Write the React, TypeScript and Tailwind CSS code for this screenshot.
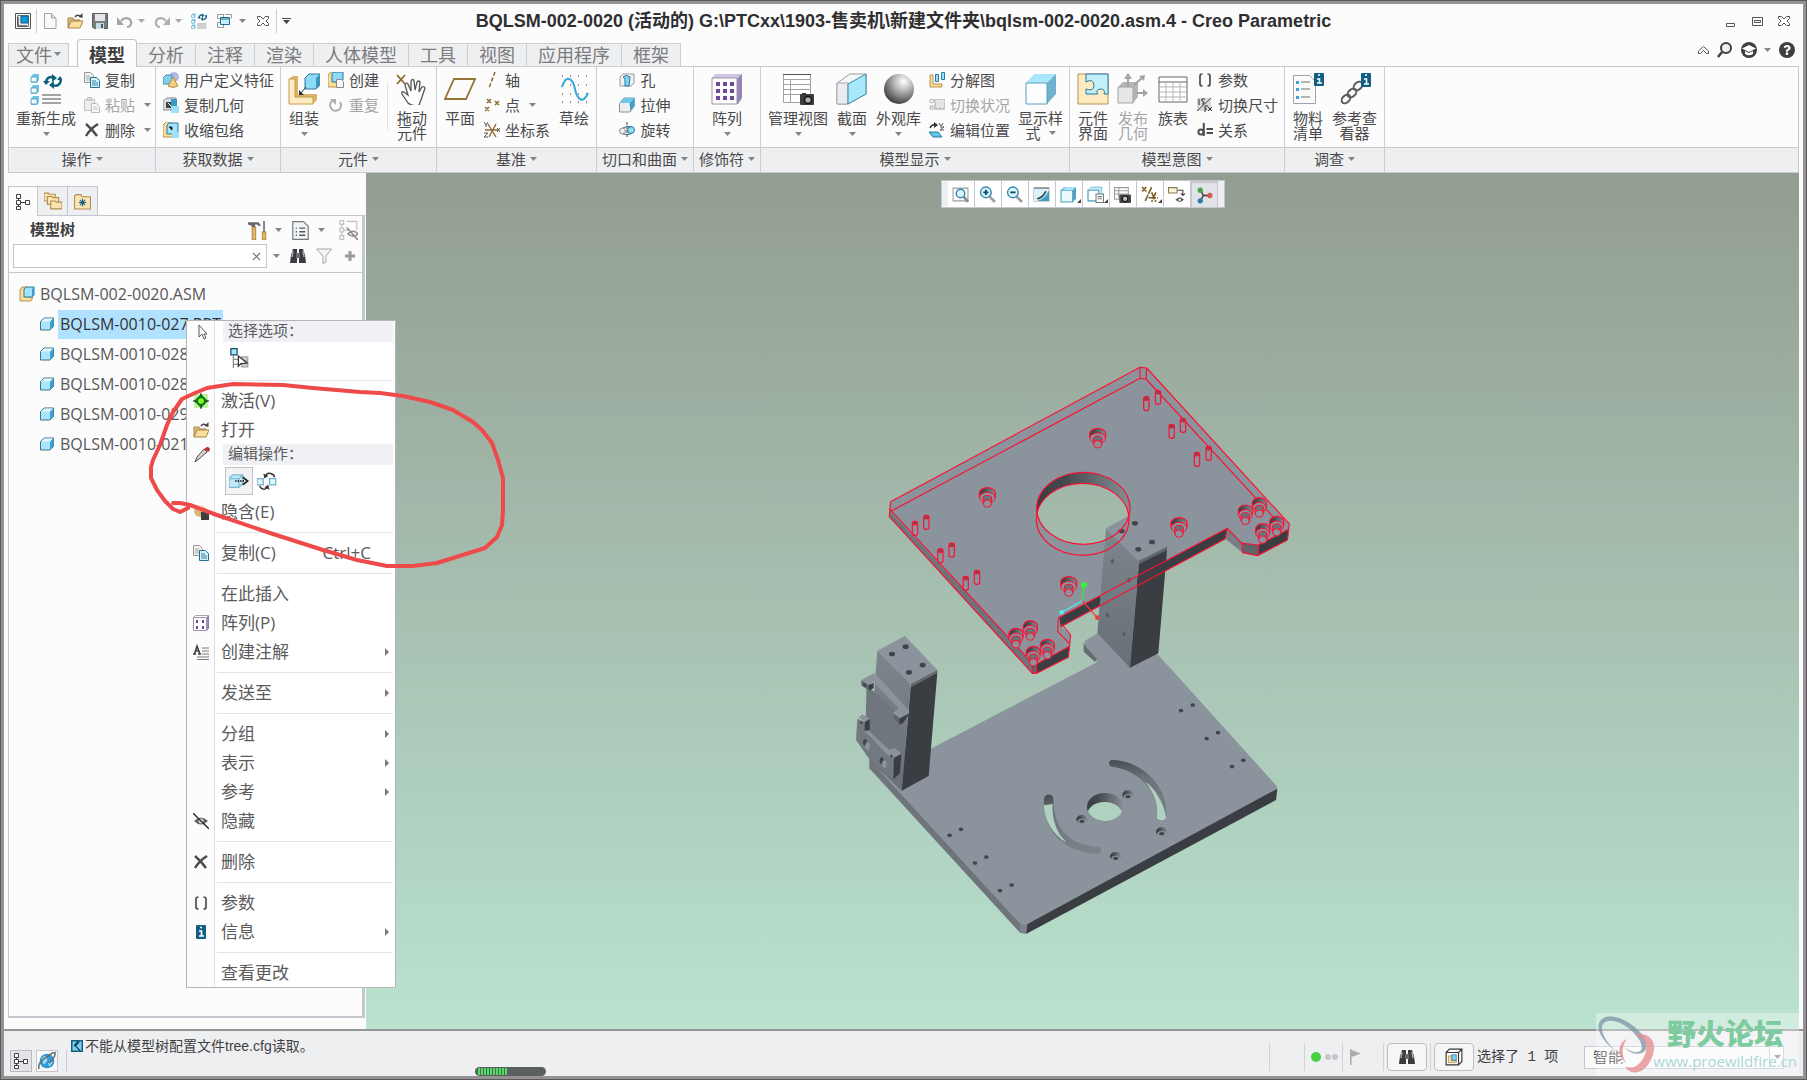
import React from 'react';
import { FaQuestion } from 'react-icons/fa';

const Box = () => (
  <>
    <path d="M1.5 5.5L5 2h9.5v8.5L11 14H1.5z" fill="#a9e6fb" stroke="#3d6f86" />
    <path d="M11 14V5.5L14.5 2v8.5z" fill="#3aa3cf" />
    <path d="M2 5.5L5.3 2.4h8.6L11 5.4z" fill="#e2f7fe" />
  </>
);

const Regen = () => (
  <>
    {[1, 12, 23].map(y => (
      <g key={y}>
        <path d={`M1 ${y + 3}l2-3h6v6l-2 3H1z`} fill="#6ec4e6" />
        <path d={`M1 ${y + 3}h6v5H1z`} fill="#f2fbff" stroke="#5aa7c8" />
      </g>
    ))}
    <path d="M16 9c1-5 5-6 8-4M31 6c0 5-4 8-8 6" fill="none" stroke="#0b5f82" strokeWidth="2.500" />
    <path d="M22 1v8l5-4zM24 16V8l-5 4zM13 8h7l-4 4zM27 7h6l-3-4z" fill="#0b5f82" />
    <path d="M12 22h19M12 26h19M12 30h19" stroke="#a3a3a5" strokeWidth="2" />
  </>
);

// 16px drawings
const small: { [key: string]: React.ReactNode } = {
  app: (<><path d="M.5.5h15v15H.5z" fill="#fff" stroke="#555" /><path d="M2.5 2.5h11v11h-11z" fill="#e8e8e8" stroke="#777" /><path d="M6 3h7v7H6z" fill="#0b9be0" stroke="#0a5d8c" /><path d="M3 4v9h9" fill="none" stroke="#333" /></>),
  file: (<><path d="M2.500.5h7L14 5v10.500H2.500z" fill="#f6f8fa" stroke="#a2a4a8" /><path d="M9.500.5V5H14" fill="#d6dbe0" stroke="#a2a4a8" /></>),
  open: (<><path d="M1 15V5h5l1 2h6v2" fill="#d9b676" stroke="#a98548" /><path d="M1 15l3-7h12l-3 7z" fill="#fbdf9f" stroke="#a98548" /><path d="M8 4q2-3 5-1" fill="none" stroke="#444" strokeWidth="1.500" /><path d="M15.500 0v5l-4-1z" fill="#444" /></>),
  save: (<><path d="M.5.5h15v15H2L.5 14z" fill="#7a7c80" stroke="#5c5e62" /><path d="M3 1h10v7H3z" fill="#e6e6e8" /><path d="M4 10h8v6H4z" fill="#c4dbe8" /><path d="M9 11h2v4H9z" fill="#555" /></>),
  undo: (<><path d="M4 8c4-5 11-3 10 3q-1 3-4 3" fill="none" stroke="#a5a5a7" strokeWidth="2.200" /><path d="M0 4v8h7z" fill="#a5a5a7" /></>),
  redo: (<><path d="M12 8C8 3 1 5 2 11q1 3 4 3" fill="none" stroke="#b0b0b2" strokeWidth="2.200" /><path d="M16 4v8H9z" fill="#b0b0b2" /></>),
  regen: (<g transform="scale(.5)"><Regen /></g>),
  windows: (<><path d="M1.500 1.500h6v4h-6zM9.500 1.500h6v4M1.500 9.500h6v5h-6z" fill="#fff" stroke="#999" /><path d="M4.500 4.500h9v7h-9z" fill="#c5eefb" stroke="#1f6d8f" /><path d="M5 6h8" stroke="#1f6d8f" /></>),
  xOutline: (<path d="M2.500 3.500h3L8 6l2.500-2.500h3v2L11 8l2.500 2.500v2h-3L8 10l-2.500 2.500h-3v-2L5 8 2.500 5.500z" fill="#fff" stroke="#555" />),
  copy: (<><path d="M.5.5h6l3 3v7h-9z" fill="#f1f1f2" stroke="#9a9a9c" /><path d="M2 4h4M2 6h6M2 8h6" stroke="#aaa" /><path d="M6.500 5.500h6l3 3v7h-9z" fill="#d3f1fb" stroke="#27708f" /><path d="M8 9h4M8 11h6M8 13h6" stroke="#3a83a1" /></>),
  paste: (<><path d="M.5 2.500h10v11H.5z" fill="#ededee" stroke="#c2c2c4" /><path d="M3.500.5h4v3h-4z" fill="#ddd" stroke="#c2c2c4" /><path d="M7.500 6.500h5l3 3v6h-8z" fill="#f7f7f7" stroke="#bcbcbe" /><path d="M9 10h4M9 12h5" stroke="#c8c8c8" /></>),
  cross: (<path d="M2 2q6 5 11 12M14 2Q6 7 2 14" fill="none" stroke="#4b4b4d" strokeWidth="2.400" />),
  udf: (<><circle cx="11" cy="5" r="5" fill="#b6b9e4" /><path d="M0 6l3-3h6v6l-3 3H0z" fill="#7fd0ee" stroke="#4a8ba8" /><path d="M10 5l5 9q-5 3-10 0z" fill="#f3cf86" stroke="#b58e46" /></>),
  copyGeom: (<><path d="M0 4l4-3h9v5h-5v7H0z" fill="#dcdde0" stroke="#88898c" /><path d="M3 5h6v6H3z" fill="#444" /><path d="M5 6l3 3" stroke="#fff" /><path d="M8 9h8v7H8z" fill="#9be1fb" /><path d="M8 2h6v7H8" fill="#3b9ac4" /></>),
  shrink: (<><path d="M0 3l3-3h4v10h6v5H0z" fill="#fbdc98" stroke="#b89250" /><path d="M4 3l2-2h9v8l-2 3H4z" fill="#a3e4fa" stroke="#27799d" /><path d="M6 5l3 3V5z" fill="#222" stroke="#222" /><path d="M9 10h7v6H9z" fill="#9be1fb" /></>),
  create: (<><path d="M0 3l3-3h3v10h6v5H0z" fill="#fbdc98" stroke="#b89250" /><path d="M4 2l2-2h9v8l-3 2H4z" fill="#8edbf6" stroke="#27799d" /><path d="M8.500 7.500h5l2 2v6h-7z" fill="#f8f8f8" stroke="#8a8a8c" /></>),
  repeat: (<><path d="M4 4a5.500 5.500 0 1 0 8 1" fill="none" stroke="#b0b0b2" strokeWidth="2" /><path d="M2 2h6v6z" fill="#b0b0b2" /></>),
  axis: (<path d="M11 0L5 16" stroke="#8c6c2d" strokeWidth="1.500" strokeDasharray="4 2" />),
  points: (<path d="M3 2l4 4M7 2L3 6M11 4l4 4M15 4l-4 4M1 10l4 4M5 10l-4 4" stroke="#8c6c2d" strokeWidth="1.500" />),
  csys: (<><path d="M1 8h14M4 2l8 13M12 2L5 15" stroke="#8c6c2d" strokeWidth="1.400" /><path d="M0 0l2 3 2-3M2 3v2M0 11h4l-4 4h4M13 6l3 4M16 6l-3 4" fill="none" stroke="#555" /></>),
  hole: (<><path d="M1 5l3-3h11v9l-3 3H1z" fill="#eef0f2" stroke="#9a9ca0" /><path d="M4 5q3-3 7 0l-1 9H6l0-7z" fill="#7fd3f2" stroke="#27799d" /></>),
  extrude: (<><path d="M.5 6.500L5 1h10.500v8L11 15H.5z" fill="#eceef0" stroke="#8b8d90" /><path d="M5 1h10.500v8h-5V6h-10z" fill="#6fc7e8" /><path d="M11 6l4-4v7l-4 5z" fill="#3d9fc8" /></>),
  revolve: (<><circle cx="3.500" cy="9" r="3" fill="#eee" stroke="#8b8d90" /><circle cx="12" cy="8" r="3.500" fill="#8edbf6" stroke="#27799d" /><path d="M4 6q5-3 8-1M4 12q4 1 8 0" fill="none" stroke="#27799d" /><path d="M8 0v16" stroke="#444" strokeDasharray="3 1" /></>),
  explode: (<><path d="M1 3h3v9h9v3H1z" fill="#fbdc98" stroke="#b89250" /><path d="M6.500 2.500h3v7h-3zM12.500.5h3v7h-3z" fill="#9be1fb" stroke="#27799d" /></>),
  toggleState: (<><circle cx="2.500" cy="4" r="1.800" fill="none" stroke="#aaa" /><path d="M1 9h3v3H1z" fill="none" stroke="#aaa" /><path d="M5 2h11v11H5z" fill="#c9c9cb" /><path d="M8 3v7h2V3M12 3v7h2V3" fill="none" stroke="#fff" /></>),
  editPos: (<><path d="M1 6q2-4 5-3" fill="none" stroke="#333" strokeWidth="1.500" /><path d="M5 0v6l4-3z" fill="#333" /><path d="M10 1l2 3 2-3M11 5h4l-4 3h4" fill="none" stroke="#555" /><path d="M0 10h9l4 5H4z" fill="#63c5ea" stroke="#27799d" /></>),
  params: (<path d="M5.500 2Q3 2 3 4v8q0 2 2.500 2M10.500 2q2.500 0 2.500 2v8q0 2-2.500 2" fill="none" stroke="#4d4d4f" strokeWidth="1.700" />),
  dims: (<><path d="M0 1h14v13H0z" fill="#d8d8da" /><path d="M0 14L14 1" stroke="#444" /><path d="M2 2v6M5 2h3M5 2v2l2 1v2H5M8 15V9h3M8 12h2M11 10l4 4M15 10l-4 4" fill="none" stroke="#333" /></>),
  relation: (<><circle cx="4" cy="10" r="2.600" fill="none" stroke="#4d4d4f" strokeWidth="2" /><path d="M6.800 1v13M9.500 7H16M9.500 11H16" stroke="#4d4d4f" strokeWidth="2" /></>),
  part: (<Box />),
  asm: (<><path d="M1 4l2-3h4v10h7l-2 4H1z" fill="#fbdc98" stroke="#b89250" /><path d="M5 3l2-2h8v8l-2 2H5z" fill="#a3e4fa" stroke="#27799d" /><path d="M13 11V3l2-2v8z" fill="#3aa3cf" /></>),
  tree: (<path d="M1.500.5h4v4h-4zM1.500 6.500h4v4h-4zM1.500 12.500h4v3h-4zM10.500 6.500h4v4h-4zM3.500 4.500v2M3.500 10.500v2M5.500 8.500h5" fill="#fff" stroke="#3f3f41" />),
  folders: (<>{[[0, 0], [3, 3], [6, 7]].map(([x, y]) => (<path key={x} d={`M${x} ${y + 1}h4l1 1h5v6H${x}z`} fill="#fbe4b0" stroke="#b08f55" />))}</>),
  favorites: (<><path d="M.5 15V2.500l2-1h4l1 2h8V15z" fill="#fbe4b0" stroke="#b08f55" /><path d="M8 5.500v7M4.500 9h7M5.500 6.500l5 5M10.500 6.500l-5 5" stroke="#126083" /></>),
  tools: (<><path d="M0 1h9l2 3H8V3H6v2H3V4L0 3z" fill="#66686b" /><path d="M3.500 5h3v11h-3z" fill="#e5b45f" stroke="#96702f" strokeWidth=".6" /><path d="M13.500 0v9" stroke="#77797c" strokeWidth="1.500" /><path d="M12 9h3v7h-3z" fill="#e5b45f" stroke="#96702f" strokeWidth=".6" /></>),
  listDoc: (<><path d="M1.500.5h9l4 4v11h-13z" fill="#f0f5f8" stroke="#77797c" /><path d="M4 6h1M4 9h1M4 12h1M7 6h5M7 9h5M7 12h5" stroke="#55575a" strokeWidth="1.200" /></>),
  treeHide: (<><path d="M1.500.5h3v3h-3zM1.500 6.500h3v3h-3zM1.500 12.500h3v3h-3zM3 4v2M3 10v2M5 8h4M7 1h8v7" fill="none" stroke="#c2c2c4" /><path d="M8 11q4-4 8 0-4 4-8 0zM7 6l9 10" fill="none" stroke="#8d8d8f" strokeWidth="1.300" /></>),
  find: (<><path d="M0 15l1-8 2-6h4v14zM16 15l-1-8-2-6H9v14z" fill="#3a3c3f" /><path d="M6 5h4v5H6z" fill="#6b6d70" /><path d="M2 9l1-6M13 3l1 6" stroke="#a8aaad" strokeWidth="1.500" /></>),
  filter: (<path d="M.5 1h15L10 8v6l-3 1.500V8z" fill="#f4f4f5" stroke="#a7a7a9" />),
  plus: (<path d="M6.500 3h3v3.500H13v3H9.500V13h-3V9.500H3v-3h3.500z" fill="#9b9b9d" />),
  cursor: (<path d="M5 1v12l3-3 2 5 2-1-2-4h3z" fill="#fff" stroke="#555" />),
  activate: (<><path d="M1 1h14v14H1z" fill="#bdf3a2" /><path d="M8 1l7 7-7 7-7-7z" fill="#0d7a12" /><circle cx="8" cy="8" r="3.500" fill="#7bfb2c" stroke="#065e0a" /><path d="M8 0v3M8 13v3M0 8h3M13 8h3" stroke="#222" /></>),
  pencil: (<><path d="M1 15l2-5 7-8 3 3-8 7z" fill="#d6d1cb" stroke="#55504b" /><path d="M10 2l3-2q3 0 3 3l-2 2z" fill="#b8322d" /></>),
  suppress: (<><circle cx="7" cy="7" r="6" fill="#dcb877" /><path d="M3 4q3-3 7-1" stroke="#fff3d3" strokeWidth="2" fill="none" /><path d="M8 8h8v8H8z" fill="#3f3f41" /></>),
  pattern: (<><path d="M13.500 2.500l2-2v13l-2 2z" fill="#9d87c4" stroke="#8f79b5" /><path d="M.5 2.500l2-2h13l-2 2z" fill="#fff" stroke="#aaa5b5" /><path d="M.5 2.500h13v13H.5z" fill="#fff" stroke="#9b96a8" /><path d="M3 5h2v3H3zM9 5h2v3H9zM3 11h2v3H3zM9 11h2v3H9z" fill="#6c4b9c" /></>),
  note: (<><path d="M0 10h3M5 10h3M1.500 10l2.500-8 3 8M2.500 7h3" stroke="#3f3f41" strokeWidth="1.500" fill="none" /><path d="M9 4h7M9 7h7M9 10h7M4 13h12M4 15.500h12" stroke="#77797c" /></>),
  hide: (<><path d="M1 8q7-7 14 0-7 7-14 0z" fill="#5c5e61" /><circle cx="8" cy="8" r="2.500" fill="#ddd" /><path d="M0 0l16 16" stroke="#222" strokeWidth="1.300" /></>),
  info: (<><rect x="3" y="1" width="10" height="14" rx="1" fill="#125f83" /><path d="M7 3.500h2M6 7h2.500v5M6 12h5" stroke="#fff" strokeWidth="1.700" fill="none" /></>),
  msg: (<><path d="M1 1h14v14H1z" fill="#7fd0ee" stroke="#125f83" strokeWidth="2" /><path d="M11 2L6 8l6 6M9 2L4 8" stroke="#0b4863" strokeWidth="1.600" fill="none" /></>),
  globe: (<><circle cx="8" cy="8" r="6.500" fill="#2e9bd3" /><path d="M3 6q4-5 5-1t-3 6zM9 10q3-3 4-1l-3 4z" fill="#9bdaf3" /><path d="M1 15Q-1 10 8 4t7-3q1 3-5 9" fill="none" stroke="#6c6e71" strokeWidth="1.400" /></>),
  flag: (<path d="M1 0h1.500v1L12 4.500 2.500 8v8H1z" fill="#aaacae" />),
  boxSelect: (<><path d="M1 4l3-3h11v11l-3 3H1zM1 4h11v11M12 4l3-3" fill="#fff" stroke="#333" /><path d="M3 7h3v4h4v2H3z" fill="#fbdc98" stroke="#b89250" strokeWidth=".7" /><path d="M6 6h4v5H6z" fill="#7fd0ee" stroke="#27799d" strokeWidth=".7" /></>),
  treeSelect: (<><path d="M3.500 6v10M3.500 9h6M3.500 13h6" fill="none" stroke="#8b8b8d" /><path d="M10 7h5v3h-5zM10 11h5v4h-5z" fill="#c9c9cb" stroke="#a5a5a7" /><path d="M1.500.5h5v5h-5z" fill="#9be6fc" stroke="#1a4d66" /><path d="M7.500 6.500v8l2-2 5-.5z" fill="#fff" stroke="#333" /></>),
  redefine: (<><path d="M0 6l3-3h8v7l-3 3H0z" fill="#bfeafa" stroke="#7fb9d0" /><path d="M0 6h8v7M8 6l3-3" fill="none" stroke="#7fb9d0" /><path d="M5 8h8" stroke="#222" strokeDasharray="1 1" strokeWidth="1.500" /><path d="M11 5l4 3-4 3" fill="none" stroke="#222" strokeWidth="1.300" /></>),
  replace: (<><path d="M0 6h5v5H0zM10 6h5v5h-5z" fill="#dff5fc" stroke="#6fb3cd" /><path d="M7 4q1-3 4-2t3 3M8 13q-1 2-3 1.500T2 12" fill="none" stroke="#333" strokeWidth="1.200" /><path d="M5 2l1 4 3-2zM10 15l-1-4-3 2z" fill="#333" /></>),
  zoomFit: (<><path d="M1 2h14v12H1z" fill="#fff" stroke="#9b9da0" /><circle cx="8" cy="7" r="4" fill="#e3f6fd" stroke="#2b88b0" strokeWidth="1.300" /><path d="M11 10l4 5" stroke="#8b8d90" strokeWidth="2.500" /></>),
  zoomIn: (<><path d="M10 10l5 5" stroke="#9b9da0" strokeWidth="2.500" /><circle cx="6.500" cy="6" r="5" fill="#e3f6fd" stroke="#2b88b0" strokeWidth="1.300" /><path d="M4 6h5M6.500 3.500v5" stroke="#0c4d6c" strokeWidth="1.800" /></>),
  zoomOut: (<><path d="M10 10l5 5" stroke="#9b9da0" strokeWidth="2.500" /><circle cx="6.500" cy="6" r="5" fill="#e3f6fd" stroke="#2b88b0" strokeWidth="1.300" /><path d="M4 6h5" stroke="#0c4d6c" strokeWidth="1.800" /></>),
  repaint: (<><path d="M1 2h14v12H1z" fill="#8fd0e8" stroke="#9b9da0" /><path d="M1 2h14v2L4 14H1z" fill="#d9f3fb" /><path d="M15 5v9H5q7-2 10-9z" fill="#3f9dc2" /><path d="M12 5q-3 6-8 7" fill="none" stroke="#222" strokeWidth="1.300" /><path d="M1 2h14" stroke="#8b8d90" strokeWidth="1.500" /></>),
  viewBox: (<><path d="M1 4l3-3h11v11l-3 3H1z" fill="#4f9fc2" /><path d="M1 4h11v11H1z" fill="#e9f9fe" stroke="#4f9fc2" /><path d="M2 4l3-3h10l-3 3z" fill="#a5e4fa" /></>),
  savedViews: (<><path d="M1 4l3-3h10v10l-3 3H1z" fill="#bfeafa" stroke="#6fb3cd" strokeWidth=".7" /><path d="M1 4h10v10H1z" fill="#fff" stroke="#4f9fc2" /><path d="M8.500 7.500h7v8h-7z" fill="#fff" stroke="#77797c" /><path d="M10 10h4M10 12h4" stroke="#77797c" /></>),
  viewMgr: (<><path d="M.5 1.500h13v11H.5zM.5 4.500h13M.5 7.500h13M4.500 1.500v11" fill="#fff" stroke="#9b9da0" /><rect x="5" y="8" width="11" height="8" rx="1" fill="#444" /><circle cx="10.500" cy="12" r="2.600" fill="#bbb" stroke="#111" /></>),
  datum: (<path d="M1 1l4 4M5 1L1 5M10 1L4 14M7 11h9M10 6l4 9M14 6l-4 9" stroke="#7d5f25" strokeWidth="1.500" strokeDasharray="7 1" />),
  annot: (<><path d="M.5 1.500h8v5h-8z" fill="#fdf3dc" stroke="#8c7a55" /><path d="M9 4h5v5M12 7l2 2 2-2" fill="none" stroke="#444" /><path d="M7 13q4-5 8 0-4 4-8 0z" fill="#555" /><circle cx="11" cy="13" r="1.200" fill="#fff" /></>),
  spin: (<><path d="M4 3l3 5-3 5M7 8h6" fill="none" stroke="#333" strokeWidth="1.300" /><circle cx="4" cy="3" r="2.500" fill="#45a34a" /><circle cx="4" cy="13" r="2.500" fill="#2b7fb0" /><circle cx="13" cy="8" r="2.500" fill="#d9534f" /></>),
};

// 32px drawings
const large: { [key: string]: React.ReactNode } = {
  regen: (<Regen />),
  assemble: (<><path d="M1 6l4-3h5v18h19v6l-4 4H1z" fill="#dcb263" /><path d="M1 6h6v18h18v7H1z" fill="#fdebc2" stroke="#c39c50" /><path d="M17 5l4-4h11v11l-4 4H17z" fill="#8edbf6" stroke="#27799d" /><path d="M28 5l4-4v11l-4 4z" fill="#3e93b8" /><path d="M18 14l-6 7" stroke="#333" /><path d="M11 17v5h5z" fill="#333" /></>),
  drag: (<><path d="M1 2l8 9M9 2L1 11" stroke="#8c6c2d" strokeWidth="1.800" /><path d="M12 30l-6-9q-1-3 2-2l4 3-3-10q1-3 3-1l3 7 0-10q2-3 3 0l1 9 2-8q2-2 3 0l-1 10 3-5q2-1 3 1l-4 12-2 5q-6 2-11-2z" fill="#fff" stroke="#555" strokeWidth="1.300" /></>),
  plane: (<path d="M10 6h21l-9 20H1z" fill="none" stroke="#937338" strokeWidth="1.800" />),
  sketch: (<><path d="M4 3h25M4 12h25M4 21h25M4 29h25" stroke="#222" strokeDasharray="1 7" /><path d="M4 14c4-14 11-8 13 2s8 16 13 4" fill="none" stroke="#3aa8dc" strokeWidth="2" /></>),
  pattern: (<><path d="M1 5l4-4h26v24l-4 6H1z" fill="#9884bd" /><path d="M1 5l4-4h26l-4 4z" fill="#cfc5e2" /><path d="M1 5h25v26H1z" fill="#fdfdff" stroke="#9a96a6" />{[9, 16, 23].map(y => [5, 12, 19].map(x => (<path key={`${x}-${y}`} d={`M${x} ${y}h4v4h-4z`} fill="#6c4b9c" />)))}</>),
  viewMgr: (<><path d="M1.500 1.500h27v28h-27zM1.500 6.500h27M1.500 11.500h27M1.500 16.500h27M1.500 21.500h27M8.500 6v23" fill="#fff" stroke="#a0a2a5" /><path d="M1 1.500h28" stroke="#555" /><rect x="18" y="21" width="14" height="11" rx="1" fill="#3d3d3f" /><circle cx="26" cy="27" r="3.500" fill="#aaa" stroke="#111" strokeWidth="1.500" /><path d="M20 20h4v2h-4z" fill="#333" /></>),
  section: (<><path d="M1 10L14 1h16v20L12 31H1z" fill="#f5f6f7" stroke="#999b9e" /><path d="M1 10h11v21H1z" fill="#ececee" stroke="#a5a7aa" /><path d="M12 11L30 1v20L12 31z" fill="#a9e8fc" stroke="#3c87a8" /></>),
  sphere: (<circle cx="16" cy="16" r="15" fill="url(#ball)" />),
  style: (<><path d="M1 10L10 1h21v20l-9 10H1z" fill="#6fb2cf" /><path d="M1 10L10 1h21l-9 9z" fill="#a9e8fc" /><path d="M1 10h21v21H1z" fill="#fdfeff" stroke="#5b9db9" /></>),
  iface: (<><path d="M1 1h30v30H1z" fill="#fdebc2" stroke="#b89250" /><path d="M9 1h22v20h-4q2-5-4-5-5 1-2 5H9v-5q8 3 8-4-1-7-8-3z" fill="#c3eefb" stroke="#27799d" /></>),
  publish: (<><path d="M1 14l5-5h15v15l-5 6H1z" fill="#b5b5b7" /><path d="M1 14h15v16H1z" fill="#e6e6e8" stroke="#a3a3a5" /><path d="M11 14V3M17 12l9-8M18 20h10" stroke="#a3a3a5" strokeWidth="2" /><path d="M11 0l4 6H7zM31 20l-5 4v-8zM28 2l-1 6-5-5z" fill="#a3a3a5" /></>),
  family: (<><path d="M2 4h28v25H2z" fill="#fff" stroke="#666" /><path d="M2 9h28" stroke="#666" /><path d="M2 14h28M2 19h28M2 24h28M9 9v20M16 9v20M23 9v20" stroke="#b5b5b7" /></>),
  bom: (<><path d="M1.500 2.500h16l6 6v22h-22z" fill="#fafafa" stroke="#a0a2a5" /><path d="M9 9h9M9 16h9M9 24h9" stroke="#9b9da0" strokeWidth="1.500" /><path d="M4 8h3v3H4zM4 15h3v3H4zM4 23h3v3H4z" fill="#35a4d6" /><rect x="22" y="0" width="10" height="13" rx="1" fill="#125f83" /><path d="M26 2h2M25 6h2.500v4M25 10h5" stroke="#fff" strokeWidth="1.500" fill="none" /></>),
  refs: (<><g fill="none" stroke="#5b5b5d" strokeWidth="2"><ellipse cx="7" cy="26" rx="5" ry="3.500" transform="rotate(-45 7 26)" /><ellipse cx="13" cy="20" rx="5" ry="3.500" transform="rotate(-45 13 20)" /><ellipse cx="19" cy="13" rx="5" ry="3.500" transform="rotate(-45 19 13)" /></g><rect x="22" y="0" width="10" height="14" rx="1" fill="#125f83" /><path d="M26 2h2M25 6h2.500v5M25 11h5" stroke="#fff" strokeWidth="1.500" fill="none" /></>),
};

const Icon = ({ name, className = 'size-4' }: { name: string; className?: string }) => (
  <svg viewBox="0 0 16 16" className={`shrink-0 ${className}`} aria-hidden="true">{small[name]}</svg>
);

const Caret = ({ className = 'text-[#858587]' }: { className?: string }) => (
  <svg viewBox="0 0 7 4" className={`h-1 w-[7px] shrink-0 ${className}`} aria-hidden="true">
    <path d="M0 0h7L3.500 4z" fill="currentColor" />
  </svg>
);

const BigButton = ({ icon, lines, caret, inlineCaret, disabled }: { icon: string; lines: string[]; caret?: boolean; inlineCaret?: boolean; disabled?: boolean }) => (
  <button disabled={disabled} className={`flex min-w-8 shrink-0 flex-col items-center pt-[6px] leading-[15px] ${disabled ? 'text-[#a5a5a7]' : ''}`}>
    <svg viewBox="0 0 32 32" className="mb-[5px] size-8" aria-hidden="true">{large[icon]}</svg>
    {lines.map((line, i) => (
      <span key={line} className="flex items-center gap-2">
        {line}
        {inlineCaret && i === lines.length - 1 && <Caret />}
      </span>
    ))}
    {caret && <span className="pt-[7px]"><Caret /></span>}
  </button>
);

type Row = { icon: string; label: string; caret?: boolean; disabled?: boolean };

const SmallColumn = ({ rows }: { rows: Row[] }) => (
  <div className="flex shrink-0 flex-col">
    {rows.map(row => (
      <button key={row.label} disabled={row.disabled} className={`flex h-[25px] items-center gap-[5px] ${row.disabled ? 'text-[#a5a5a7]' : ''}`}>
        <Icon name={row.icon} />
        <span>{row.label}</span>
        {row.caret && <span className="pl-1"><Caret /></span>}
      </button>
    ))}
  </div>
);

const Group = ({ label, width, children, center }: { label: string; width: string; children: React.ReactNode; center?: boolean }) => (
  <section className={`flex shrink-0 flex-col border-r border-[#cbcdd0] ${width}`}>
    <div className={`flex h-20 gap-2 px-[7px] ${center ? 'justify-center' : ''}`}>{children}</div>
    <button className="flex h-[25px] items-center justify-center gap-1 border-t border-[#c6c9cd] bg-[#eeeff1] pb-[3px]">
      {label}
      <Caret />
    </button>
  </section>
);

const tabs = ['模型', '分析', '注释', '渲染', '人体模型', '工具', '视图', '应用程序', '框架'];
const parts = ['BQLSM-0010-027.PRT', 'BQLSM-0010-028.PRT', 'BQLSM-0010-028.PRT', 'BQLSM-0010-029.PRT', 'BQLSM-0010-021.PRT'];
const viewTools = ['zoomFit', 'zoomIn', 'zoomOut', 'repaint', 'viewBox', 'savedViews', 'viewMgr', 'datum', 'annot', 'spin'];
const flyouts = ['viewBox', 'savedViews', 'datum'];

const TitleBar = () => (
  <header className="grid h-[35px] grid-cols-[1fr_auto_1fr] items-center px-[11px] pb-px">
    <div className="flex items-center gap-[9px]">
      <button aria-label="app"><Icon name="app" /></button>
      <span className="-mx-1 h-6 w-px bg-[#cbcdd0]" />
      <button aria-label="new"><Icon name="file" /></button>
      <button aria-label="open"><Icon name="open" /></button>
      <button aria-label="save"><Icon name="save" /></button>
      <button aria-label="undo" className="flex items-center gap-[5px]"><Icon name="undo" /><Caret className="text-[#a9a9ab]" /></button>
      <button aria-label="redo" className="flex items-center gap-[5px]"><Icon name="redo" /><Caret className="text-[#a9a9ab]" /></button>
      <button aria-label="regenerate"><Icon name="regen" /></button>
      <button aria-label="windows" className="flex items-center gap-[7px]"><Icon name="windows" /><Caret /></button>
      <button aria-label="close window"><Icon name="xOutline" /></button>
      <span className="-mx-1 h-6 w-px bg-[#cbcdd0]" />
      <button aria-label="customize" className="flex flex-col items-center gap-px">
        <span className="h-px w-[9px] bg-[#444]" />
        <Caret className="text-[#444]" />
      </button>
    </div>
    <h1 className="whitespace-nowrap font-['Liberation_Sans','Noto_Sans_CJK_SC',sans-serif] text-[18px] font-bold text-[#2f2f31]">
      BQLSM-002-0020 (活动的) G:\PTCxx\1903-售卖机\新建文件夹\bqlsm-002-0020.asm.4 - Creo Parametric
    </h1>
    <div className="flex items-center justify-end gap-[11px]">
      <button aria-label="minimize"><svg viewBox="0 0 16 16" className="size-4"><path d="M4.500 10.500h8v3h-8z" fill="#fff" stroke="#555" /></svg></button>
      <button aria-label="maximize"><svg viewBox="0 0 16 16" className="size-4"><path d="M3.500 4.500h10v8h-10zM5.500 7.500h6v2h-6z" fill="#fff" stroke="#555" /></svg></button>
      <button aria-label="close"><Icon name="xOutline" /></button>
    </div>
  </header>
);

const TabStrip = () => (
  <nav className="relative z-10 -mb-px flex h-7 items-end pl-1 pr-2 text-[18px] leading-none text-[#7c7c7e]">
    <button className="flex h-6 items-center gap-[2px] border border-[#cbcdd0] bg-[#eeeff1] px-[7px] pb-[2px]">文件<Caret /></button>
    <div className="ml-2 flex items-end">
      {tabs.map((tab, i) => (
        <button
          key={tab}
          className={i === 0
            ? 'h-7 rounded-t-sm border border-b-0 border-[#c0c3c7] bg-[#fcfcfc] px-[11px] font-bold text-[#3f3f41]'
            : 'h-6 border-y border-r border-[#cbcdd0] bg-[#eeeff1] px-[11px] pb-[2px]'}
        >
          {tab}
        </button>
      ))}
    </div>
    <div className="ml-auto flex h-full items-center gap-2 pb-[6px]">
      <button aria-label="collapse"><svg viewBox="0 0 11 8" className="h-2 w-[11px]"><path d="M.5 5L5.500.5l5 4.500v2.500h-2l-3-3-3 3h-2z" fill="#fff" stroke="#555" /></svg></button>
      <button aria-label="search"><svg viewBox="0 0 16 16" className="size-4"><circle cx="9" cy="6" r="5" fill="#eaf5fb" stroke="#3f3f41" strokeWidth="2" /><path d="M5 10l-4 5" stroke="#3f3f41" strokeWidth="2.500" /></svg></button>
      <button aria-label="learning" className="flex items-center gap-[7px]">
        <svg viewBox="0 0 16 16" className="size-4"><circle cx="8" cy="8" r="8" fill="#3f3f41" /><path d="M1 6.500L8 3l7 3.500L8 10zM4 9v3q4 2.500 8 0V9l-4 2z" fill="#fff" /></svg>
        <Caret />
      </button>
      <button aria-label="help" className="flex size-4 items-center justify-center rounded-full bg-[#3f3f41] text-white"><FaQuestion className="size-[10px]" /></button>
    </div>
  </nav>
);

const Ribbon = () => (
  <div className="mx-1 flex overflow-hidden whitespace-nowrap border border-[#c6c9cd] text-[15px] leading-none text-[#4a4a4c]">
    <Group label="操作" width="w-[147px]">
      <BigButton icon="regen" lines={['重新生成']} caret />
      <SmallColumn rows={[{ icon: 'copy', label: '复制' }, { icon: 'paste', label: '粘贴', caret: true, disabled: true }, { icon: 'cross', label: '删除', caret: true }]} />
    </Group>
    <Group label="获取数据" width="w-[125px]">
      <SmallColumn rows={[{ icon: 'udf', label: '用户定义特征' }, { icon: 'copyGeom', label: '复制几何' }, { icon: 'shrink', label: '收缩包络' }]} />
    </Group>
    <Group label="元件" width="w-[156px]">
      <BigButton icon="assemble" lines={['组装']} caret />
      <SmallColumn rows={[{ icon: 'create', label: '创建' }, { icon: 'repeat', label: '重复', disabled: true }]} />
      <span className="mt-4 h-12 w-px bg-[#e2e3e5]" />
      <BigButton icon="drag" lines={['拖动', '元件']} />
    </Group>
    <Group label="基准" width="w-[160px]">
      <BigButton icon="plane" lines={['平面']} />
      <SmallColumn rows={[{ icon: 'axis', label: '轴' }, { icon: 'points', label: '点', caret: true }, { icon: 'csys', label: '坐标系' }]} />
      <BigButton icon="sketch" lines={['草绘']} />
    </Group>
    <Group label="切口和曲面" width="w-[97px]" center>
      <SmallColumn rows={[{ icon: 'hole', label: '孔' }, { icon: 'extrude', label: '拉伸' }, { icon: 'revolve', label: '旋转' }]} />
    </Group>
    <Group label="修饰符" width="w-[67px]" center>
      <BigButton icon="pattern" lines={['阵列']} caret />
    </Group>
    <Group label="模型显示" width="w-[309px]">
      <BigButton icon="viewMgr" lines={['管理视图']} caret />
      <BigButton icon="section" lines={['截面']} caret />
      <BigButton icon="sphere" lines={['外观库']} caret />
      <SmallColumn rows={[{ icon: 'explode', label: '分解图' }, { icon: 'toggleState', label: '切换状况', disabled: true }, { icon: 'editPos', label: '编辑位置' }]} />
      <BigButton icon="style" lines={['显示样', '式']} inlineCaret />
    </Group>
    <Group label="模型意图" width="w-[215px]">
      <BigButton icon="iface" lines={['元件', '界面']} />
      <BigButton icon="publish" lines={['发布', '几何']} disabled />
      <BigButton icon="family" lines={['族表']} />
      <SmallColumn rows={[{ icon: 'params', label: '参数' }, { icon: 'dims', label: '切换尺寸' }, { icon: 'relation', label: '关系' }]} />
    </Group>
    <Group label="调查" width="w-[100px]">
      <BigButton icon="bom" lines={['物料', '清单']} />
      <BigButton icon="refs" lines={['参考查', '看器']} />
    </Group>
    <div className="flex flex-1 flex-col">
      <div className="h-20" />
      <div className="h-[25px] border-t border-[#c6c9cd] bg-[#eeeff1]" />
    </div>
  </div>
);

const ModelTree = () => (
  <aside className="flex w-[362px] shrink-0 flex-col pb-[11px] pl-1 pr-px pt-[13px]">
    <div className="relative z-10 -mb-px flex">
      <button aria-label="model tree" className="flex h-[30px] w-[30px] items-center justify-center border border-b-0 border-[#c4c8ce] bg-[#fcfcfc]"><Icon name="tree" /></button>
      <button aria-label="folders" className="flex h-[30px] w-[30px] items-center justify-center border-y border-r border-[#c4c8ce] bg-[#eeeff1]"><Icon name="folders" className="size-[18px]" /></button>
      <button aria-label="favorites" className="flex h-[30px] w-[30px] items-center justify-center border-y border-r border-[#c4c8ce] bg-[#eeeff1]"><Icon name="favorites" className="size-[17px]" /></button>
    </div>
    <div className="flex flex-1 flex-col border border-r-[3px] border-b-2 border-[#c4c8ce]">
      <div className="h-[57px] border-b border-[#c4c8ce] pl-1 pr-1">
        <div className="flex h-7 items-center pl-[17px]">
          <h2 className="pb-[2px] text-[15px] font-bold text-[#3f3f41]">模型树</h2>
          <div className="ml-auto flex items-center gap-[9px]">
            <button aria-label="settings" className="flex items-center gap-2"><Icon name="tools" className="size-[19px]" /><Caret /></button>
            <button aria-label="show" className="flex items-center gap-2"><Icon name="listDoc" className="size-[19px]" /><Caret /></button>
            <button aria-label="hide tree" className="pl-1"><Icon name="treeHide" className="size-5" /></button>
          </div>
        </div>
        <div className="flex items-center">
          <div className="flex h-6 w-[254px] items-center border border-[#c4c8ce] bg-white pr-[5px]">
            <input aria-label="search" className="w-full flex-1 px-1 outline-none" />
            <button aria-label="clear"><svg viewBox="0 0 9 9" className="size-[9px]"><path d="M1 1l7 7M8 1L1 8" stroke="#777" strokeWidth="1.200" /></svg></button>
          </div>
          <div className="ml-auto flex items-center gap-[10px]">
            <Caret />
            <button aria-label="find"><Icon name="find" /></button>
            <button aria-label="filter"><Icon name="filter" /></button>
            <button aria-label="add"><Icon name="plus" /></button>
          </div>
        </div>
      </div>
      <ul className="pt-[6px] font-['Open_Sans',sans-serif] text-[16px] text-[#58585a]">
        <li className="flex h-[30px] items-center gap-[3px] pl-[10px]"><Icon name="asm" /><span className="px-[2px]">BQLSM-002-0020.ASM</span></li>
        {parts.map((part, i) => (
          <li key={i} className="flex h-[30px] items-center gap-[3px] pl-[30px]">
            <Icon name="part" />
            <span className={i === 0 ? 'bg-[#b0e2ff] px-[2px] leading-[29px] text-[#333]' : 'px-[2px]'}>{part}</span>
          </li>
        ))}
      </ul>
    </div>
  </aside>
);

const bores = [[683, 252], [352, 430], [927, 520], [596, 697]];
const cornerBores = [[1126, 482], [1168, 460], [1178, 538], [1220, 516], [438, 852], [481, 829], [490, 906], [532, 885]];
const pins = [[829, 161], [864, 142], [905, 244], [939, 226], [981, 328], [1016, 310], [135, 535], [169, 517], [211, 617], [245, 600], [287, 700], [321, 682]];
const plateHoles = [[1058, 255], [1023, 272], [1134, 338], [1100, 356], [1210, 421], [1176, 440], [363, 628], [329, 646], [439, 711], [405, 729], [515, 795], [480, 812]];

const Scene = () => (
  <svg viewBox="366 173 1433 856" className="absolute inset-0 size-full" aria-hidden="true">
    <defs>
      <linearGradient id="skyLow" gradientUnits="userSpaceOnUse" x1="0" x2="0" y1="-1341" y2="1227"><stop stopColor="#939d92" /><stop offset="1" stopColor="#b9e3cf" /></linearGradient>
      <linearGradient id="skyUp" gradientUnits="userSpaceOnUse" x1="0" x2="0" y1="-531" y2="2037"><stop stopColor="#939d92" /><stop offset="1" stopColor="#b9e3cf" /></linearGradient>
      <linearGradient id="wall"><stop stopColor="#3a3d41" /><stop offset=".3" stopColor="#45494d" /><stop offset="1" stopColor="#868e96" /></linearGradient>
      <linearGradient id="slot" x1="0" x2="0" y1="0" y2="1"><stop stopColor="#484c50" /><stop offset=".3" stopColor="#6c7279" /><stop offset="1" stopColor="#7b838a" /></linearGradient>
      <linearGradient id="side" x1="0" x2="0" y1="0" y2="1"><stop stopColor="#7d858d" /><stop offset="1" stopColor="#686f76" /></linearGradient>
      <clipPath id="bigHole"><ellipse cx="640" cy="475" rx="140" ry="108" /></clipPath>
      <clipPath id="midHole"><ellipse cx="795" cy="561" rx="54" ry="42" /></clipPath>
    </defs>

    {/* base plate and left post */}
    <g transform="translate(840 620) scale(.333333)">
      <path d="M88 418L275 385 768 128 772 118 735 75 735 62 775 38 955 105 1312 500 1308 512 562 912 540 910z" fill="#8b939c" />
      <path d="M731 65V95L765 126 772 118 765 110 735 76z" fill="#656b72" />
      <path d="M88 418V445L540 938 540 910z" fill="#6d747b" />
      <path d="M540 910L562 912 558 942 540 938z" fill="#7c838a" />
      <path d="M562 912L1312 506 1308 540 558 942z" fill="#3a3d41" />
      {plateHoles.map(([x, y]) => (<ellipse key={x} cx={x} cy={y} rx="7" ry="5.500" fill="#43474b" />))}

      <path d="M818 420C905 422 988 500 979 594A14 8 0 0 1 951 592C957 520 900 450 815 440A9 10 0 0 1 818 420z" fill="url(#slot)" />
      <path d="M915 485C945 520 955 560 951 590A14 8 0 0 0 978 595C976 570 965 545 955 530 945 510 930 495 915 485z" fill="url(#skyLow)" />
      <path d="M612 540A14 14 0 0 1 640 535C640 640 700 675 775 682A10 10 0 0 1 772 702C680 697 608 640 612 540z" fill="url(#slot)" />
      <path d="M612 556L638 552C636 590 645 620 660 645L680 668C640 645 612 600 612 556z" fill="url(#skyLow)" />
      <ellipse cx="795" cy="561" rx="54" ry="42" fill="url(#wall)" />
      <g clipPath="url(#midHole)"><ellipse cx="794" cy="588" rx="54" ry="42" fill="url(#skyLow)" /></g>
      {[[864, 524], [726, 598], [965, 635], [827, 709]].map(([x, y]) => (
        <g key={x}>
          <ellipse cx={x} cy={y} rx="17" ry="13" fill="url(#wall)" />
          <ellipse cx={x} cy={y + 6} rx="13" ry="8" fill="#8b939c" />
          <ellipse cx={x} cy={y + 6} rx="8" ry="5" fill="#3f4347" />
        </g>
      ))}

      <path d="M112 92L212 192 185 512 88 418z" fill="url(#side)" />
      <path d="M112 92L195 48 292 150 212 192z" fill="#8b939c" />
      <path d="M212 192L292 150V158L212 201z" fill="#60666c" />
      <path d="M212 201L292 158 266 468 185 512z" fill="#3a3d41" />
      {[[197, 80], [156, 102], [248, 135], [207, 157]].map(([x, y]) => (<ellipse key={x} cx={x} cy={y} rx="9" ry="7" fill="#3f4347" />))}
      <path d="M80 195L185 290 190 312 184 402 150 392 76 335z" fill="#6f767d" />
      <path d="M64 180L102 160 112 168 208 272 208 280 178 296 158 280 176 264 100 186 84 196z" fill="#8b939c" />
      <path d="M64 180L84 194 84 210 64 196zM160 280L178 294V312L162 300z" fill="#60666c" />
      <path d="M84 196L101 188V204L88 212zM178 296L208 280 190 308 178 314z" fill="#3a3d41" />
      <path d="M52 296L74 306 76 336 162 408 160 478 110 448 84 412 48 360z" fill="#727980" />
      <path d="M55 292L68 283 89 296 74 306zM76 334L88 334 148 390 162 384 181 396 181 404 164 413 145 408z" fill="#8b939c" />
      <path d="M74 306L89 298V330L74 332zM162 413L184 402 180 460 160 478z" fill="#3a3d41" />
      <path d="M88 418L160 478 188 465 185 512z" fill="#6a7178" />
      <g fill="#42464a"><ellipse cx="75" cy="367" rx="6" ry="10" /><ellipse cx="125" cy="422" rx="6" ry="10" /><circle cx="64" cy="308" r="4" /><circle cx="154" cy="408" r="4" /><circle cx="74" cy="195" r="5" /></g>
      <g fill="#8b939c"><ellipse cx="83" cy="378" rx="7" ry="11" /><ellipse cx="133" cy="432" rx="7" ry="11" /></g>
    </g>

    {/* selected plate, right post and highlight edges */}
    <g transform="translate(870 350) scale(.333333)">
      <path d="M62 455L810 52 830 54 1258 525 1254 570 1162 617 1118 608 1065 565 575 830 602 855 595 922 500 970 487 970 58 500z" fill="#8b939c" />
      <path d="M58 482V500L487 970V940z" fill="#6d747b" />
      <path d="M568 803L1072 535 1065 567 572 830zM500 942L600 889 595 921 500 970zM1165 585L1256 538 1252 570 1165 617z" fill="#3a3d41" />
      <path d="M1118 578L1165 585V616L1118 608zM487 940H500V970H487z" fill="#5d6369" />
      <path d="M1072 535L1118 578V608L1068 567z" fill="#777e85" />
      <ellipse cx="640" cy="475" rx="140" ry="108" fill="url(#wall)" />
      <g clipPath="url(#bigHole)"><ellipse cx="638" cy="508" rx="139" ry="108" fill="url(#skyUp)" /></g>
      <path d="M708 535L807 635 780 953 682 850z" fill="url(#side)" />
      <path d="M708 535L790 490 891 592 807 632z" fill="#8b939c" />
      <path d="M807 632L891 590V600L807 641z" fill="#60666c" />
      <path d="M807 641L891 600 865 910 780 953z" fill="#3a3d41" />
      {[[795, 520], [755, 543], [846, 576], [805, 598]].map(([x, y]) => (<ellipse key={x} cx={x} cy={y} rx="9" ry="7" fill="#43474b" />))}
      {[[727, 634], [777, 690], [712, 795], [762, 852]].map(([x, y]) => (<ellipse key={x} cx={x} cy={y} rx="5" ry="7" fill="#565c62" />))}
      <g fill="none" stroke="#fb1232" strokeWidth="3.500" strokeLinejoin="round">
        <path d="M62 455L810 52 830 54 1258 522 1252 570 1162 617 1118 608 1115 580 1072 535 565 803 563 845 600 882M575 822L602 855 595 922 500 970 487 970 58 500 62 455" />
        <path d="M62 484L810 85 828 87 1218 510M58 476L487 940 500 942 600 888M487 940V970M500 942V970M810 52V85M830 54L828 87M1115 580L1165 585 1256 538M1165 585V617M1072 535L1065 567 572 830" />
        <ellipse cx="640" cy="475" rx="140" ry="108" />
        <ellipse cx="638" cy="508" rx="139" ry="108" />
        {pins.map(([x, y]) => (
          <g key={x}>
            <rect x={x - 8} y={y - 21} width="16" height="42" rx="7" />
            <ellipse cx={x} cy={y - 15} rx="7" ry="5" fill="#555b61" />
          </g>
        ))}
        {[...bores, ...cornerBores].map(([x, y], i) => {
          const r = i < 4 ? 24 : 21;
          return (
            <g key={x}>
              <path d={`M${x - r} ${y}v13M${x + r} ${y}v13`} />
              <ellipse cx={x} cy={y} rx={r} ry="17" fill="url(#wall)" />
              <ellipse cx={x} cy={y + 13} rx={r - 1} ry="16" fill="#8b939c" strokeWidth="3" />
              <ellipse cx={x} cy={y + 14} rx="13" ry="8" fill="#6b7178" strokeWidth="3" />
              <ellipse cx={x} cy={y + 31} rx="12" ry="11" fill="#8b939c" strokeWidth="3" />
              <path d={`M${x - 13} ${y + 14}v17M${x + 13} ${y + 14}v17`} strokeWidth="3" />
            </g>
          );
        })}
      </g>
      <g strokeWidth="3.500">
        <path d="M637 753L641 706" stroke="#33f03c" /><circle cx="642" cy="705" r="9" fill="#33f03c" />
        <path d="M637 753L575 787" stroke="#4ef0f2" /><circle cx="575" cy="787" r="7" fill="#4ef0f2" />
        <path d="M637 753L682 803" stroke="#f53a3c" /><circle cx="682" cy="803" r="7" fill="#f53a3c" />
      </g>
    </g>
  </svg>
);

const Viewport = () => (
  <main className="relative mr-1 flex flex-1 justify-center bg-linear-to-b from-[#939d92] to-[#b9e3cf]">
    <Scene />
    <div className="relative mt-[7px] flex h-7 self-start border border-[#c4c8ce] bg-[#eeeff1] px-[6px]">
      {viewTools.map(tool => (
        <button key={tool} aria-label={tool} className={`relative flex w-[27px] items-center justify-center border-r border-[#c4c8ce] ${tool === 'spin' ? 'border-t-2 border-l bg-[#e2e3e6]' : 'bg-white'}`}>
          <Icon name={tool} className="size-[17px]" />
          {flyouts.includes(tool) && <svg viewBox="0 0 4 4" className="absolute bottom-1 right-px size-1"><path d="M4 0v4H0z" fill="#444" /></svg>}
        </button>
      ))}
    </div>
  </main>
);

type MenuEntry = { label: string; icon?: string; key?: string; sub?: boolean };

const menuGroups: MenuEntry[][] = [
  [{ label: '复制(C)', icon: 'copy', key: 'Ctrl+C' }],
  [{ label: '在此插入' }, { label: '阵列(P)', icon: 'pattern' }, { label: '创建注解', icon: 'note', sub: true }],
  [{ label: '发送至', sub: true }],
  [{ label: '分组', sub: true }, { label: '表示', sub: true }, { label: '参考', sub: true }, { label: '隐藏', icon: 'hide' }],
  [{ label: '删除', icon: 'cross' }],
  [{ label: '参数', icon: 'params' }, { label: '信息', icon: 'info', sub: true }],
  [{ label: '查看更改' }],
];

const MenuItem = ({ item }: { item: MenuEntry }) => (
  <button role="menuitem" className="flex h-[29px] w-full items-center text-left">
    <span className="flex w-[34px] shrink-0 pl-[6px]">{item.icon && <Icon name={item.icon} />}</span>
    <span className="pb-px">{item.label}</span>
    {item.key && <span className="ml-auto pr-6">{item.key}</span>}
    {item.sub && <svg viewBox="0 0 4 8" className="ml-auto mr-[6px] h-2 w-1"><path d="M0 0l4 4-4 4z" fill="#77777a" /></svg>}
  </button>
);

const MenuHeader = ({ icon, label }: { icon: string; label: string }) => (
  <div className="flex h-[21px] items-center pl-[7px] text-[15px]">
    <Icon name={icon} />
    <span className="ml-[13px] mr-[2px] flex-1 bg-[#f0f1f5] pb-[2px] pl-[5px] leading-[19px]">{label}</span>
  </div>
);

const Separator = () => (
  <div role="separator" className="flex h-3 items-center pl-[30px] pr-[2px]"><span className="h-px flex-1 bg-[#e3e4e6]" /></div>
);

const ContextMenu = () => (
  <div role="menu" className="absolute left-[185px] top-[319px] w-[210px] border border-[#b3b5b8] bg-white font-['Open_Sans','Noto_Sans_CJK_SC',sans-serif] text-[17px] leading-none text-[#5a5a5c]">
    <div className="absolute inset-y-0 left-0 w-7 border-r border-[#dedfe1] bg-[#fcfcfc]" />
    <div className="relative">
      <MenuHeader icon="cursor" label="选择选项：" />
      <div className="flex h-8 items-center pl-[42px]"><button aria-label="select parent"><Icon name="treeSelect" className="size-5" /></button></div>
      <Separator />
      <MenuItem item={{ label: '激活(V)', icon: 'activate' }} />
      <MenuItem item={{ label: '打开', icon: 'open' }} />
      <MenuHeader icon="pencil" label="编辑操作：" />
      <div className="flex h-8 items-center gap-1 pl-[38px]">
        <button aria-label="edit definition" className="flex size-7 items-center justify-center border border-[#c0c2c5] bg-[#f2f2f4]"><Icon name="redefine" className="size-5" /></button>
        <button aria-label="replace"><Icon name="replace" className="size-5" /></button>
      </div>
      <MenuItem item={{ label: '隐含(E)', icon: 'suppress' }} />
      {menuGroups.map((group, i) => (
        <React.Fragment key={i}>
          <Separator />
          {group.map(item => <MenuItem key={item.label} item={item} />)}
        </React.Fragment>
      ))}
    </div>
  </div>
);

const Scribble = () => (
  <svg viewBox="140 370 380 210" className="pointer-events-none absolute left-[139px] top-[369px] h-[210px] w-[380px]" aria-hidden="true">
    <path
      d="M173 503L180 503 190 505 217 515 270 533 323 550 357 560 387 566 413 566 437 563 485 548 497 537 502 525 503 510 503 478 498 460 492 443 482 430 473 422 453 410 430 402 403 396 380 393 360 392 313 388 283 385 233 384 207 388 195 393 182 399 173 412 167 425 160 445 153 460 151 467 151 478 157 490 165 501 173 509 180 512 188 508"
      fill="none"
      stroke="#ee4a4a"
      strokeWidth="4"
      strokeLinejoin="round"
      strokeLinecap="round"
    />
  </svg>
);

const StatusBar = () => (
  <footer className="relative flex h-[47px] items-start border-t-2 border-[#959595] bg-[#eeeff1] pl-[6px] pr-[19px] text-[15px] leading-none text-[#3f3f41]">
    <div className="flex gap-1 pt-[19px]">
      <button aria-label="toggle tree" className="flex h-[22px] w-[22px] items-center justify-center border border-[#b7b9bc] bg-[#e3e4e7]"><Icon name="tree" /></button>
      <button aria-label="toggle browser" className="flex h-[22px] w-[22px] items-center justify-center border border-[#c6c8cb] bg-[#f8f8f9]"><Icon name="globe" className="size-[18px]" /></button>
      <span className="ml-1 h-[22px] w-px bg-[#cbcdd0]" />
    </div>
    <p className="flex items-center gap-[2px] pl-1 pt-2 font-['Liberation_Sans','Noto_Sans_CJK_SC',sans-serif] text-[14px]">
      <Icon name="msg" className="size-3" />
      不能从模型树配置文件tree.cfg读取。
    </p>
    <div className="absolute bottom-0 left-[471px] flex h-[9px] w-[71px] items-center gap-px rounded-full bg-[#5c5f5f] pl-[3px]">
      {Array.from({ length: 10 }, (_, i) => <span key={i} className="h-[7px] w-[2px] bg-[#4ade63]" />)}
    </div>
    <div className="ml-auto flex items-center pt-3">
      <span className="h-7 w-px bg-[#cfd1d4]" />
      <span className="ml-[34px] h-7 w-px bg-[#cfd1d4]" />
      <span className="ml-[6px] size-[10px] rounded-full bg-[#45d13f]" />
      <span className="ml-1 size-[6px] rounded-full bg-[#c5c6c8]" />
      <span className="ml-px size-[6px] rounded-full bg-[#c5c6c8]" />
      <span className="ml-1 h-7 w-px bg-[#cfd1d4]" />
      <span className="ml-[6px]"><Icon name="flag" /></span>
      <span className="ml-[18px] h-7 w-px bg-[#cfd1d4]" />
      <button aria-label="find" className="ml-[3px] flex h-7 w-10 items-center justify-center rounded-sm border border-[#bcbec1] bg-[#f6f6f7]"><Icon name="find" /></button>
      <span className="mx-[3px] h-7 w-px bg-[#cfd1d4]" />
      <button aria-label="selected items" className="flex h-7 w-10 items-center justify-center rounded-sm border border-[#bcbec1] bg-[#f6f6f7]"><Icon name="boxSelect" className="size-[18px]" /></button>
      <span className="w-[110px] whitespace-pre pl-[3px] font-['Liberation_Mono','Noto_Sans_CJK_SC',monospace] text-[14px]">选择了 1 项</span>
      <div className="relative">
        <select aria-label="filter" className="h-[23px] w-[200px] appearance-none border border-[#c4c8ce] bg-[#fafafa] pb-[2px] pl-2 text-[15px] leading-none"><option>智能</option></select>
        <span className="pointer-events-none absolute inset-y-0 right-0 flex w-[15px] items-center justify-center border-l border-[#c4c8ce]"><Caret /></span>
      </div>
    </div>
  </footer>
);

const Watermark = () => (
  <div className="pointer-events-none absolute bottom-0 right-1 h-[63px] w-[203px] bg-white/35">
    <svg viewBox="0 0 203 63" className="absolute inset-0 size-full" aria-hidden="true">
      <path d="M27 43C8 32-4 14 6 6 16-1 34 8 45 20 52 28 52 38 46 40 38 43 30 37 28 34 34 39 42 41 45 37 48 32 42 24 36 18 26 9 14 5 8 10 1 16 12 34 27 43z" fill="#7f9aa6" opacity=".8" />
      <path d="M38 22C50 18 60 26 58 38 55 52 45 62 36 59 32 58 30 55 29 53 38 58 47 50 50 38 52 29 47 23 38 22zM31 26C26 32 25 42 30 50 20 42 22 30 31 26z" fill="#e58e92" opacity=".8" />
    </svg>
    <div className="absolute right-4 top-[3px] font-['Noto_Sans_CJK_SC',sans-serif] text-[29px] leading-8 font-black text-[#7ecba0]">野火论坛</div>
    <div className="absolute right-[2px] top-[38px] font-['Open_Sans',sans-serif] text-[15px] leading-5 text-[#a9d8d6]">www.proewildfire.cn</div>
  </div>
);

export default function App() {
  return (
    <div className="relative flex min-h-screen flex-col border border-[#5b595b] bg-[#fcfcfc] font-['Noto_Sans_CJK_SC',sans-serif]">
      <svg className="absolute size-0" aria-hidden="true">
        <defs><radialGradient id="ball" cx=".65" cy=".25" r=".8"><stop stopColor="#fff" /><stop offset=".4" stopColor="#b5b5b5" /><stop offset="1" stopColor="#383838" /></radialGradient></defs>
      </svg>
      <div className="flex flex-1 flex-col border-[3px] border-[#949294]">
        <TitleBar />
        <TabStrip />
        <Ribbon />
        <div className="flex flex-1">
          <ModelTree />
          <Viewport />
        </div>
        <StatusBar />
      </div>
      <ContextMenu />
      <Scribble />
      <div className="pointer-events-none absolute inset-[3px]"><Watermark /></div>
    </div>
  );
}
